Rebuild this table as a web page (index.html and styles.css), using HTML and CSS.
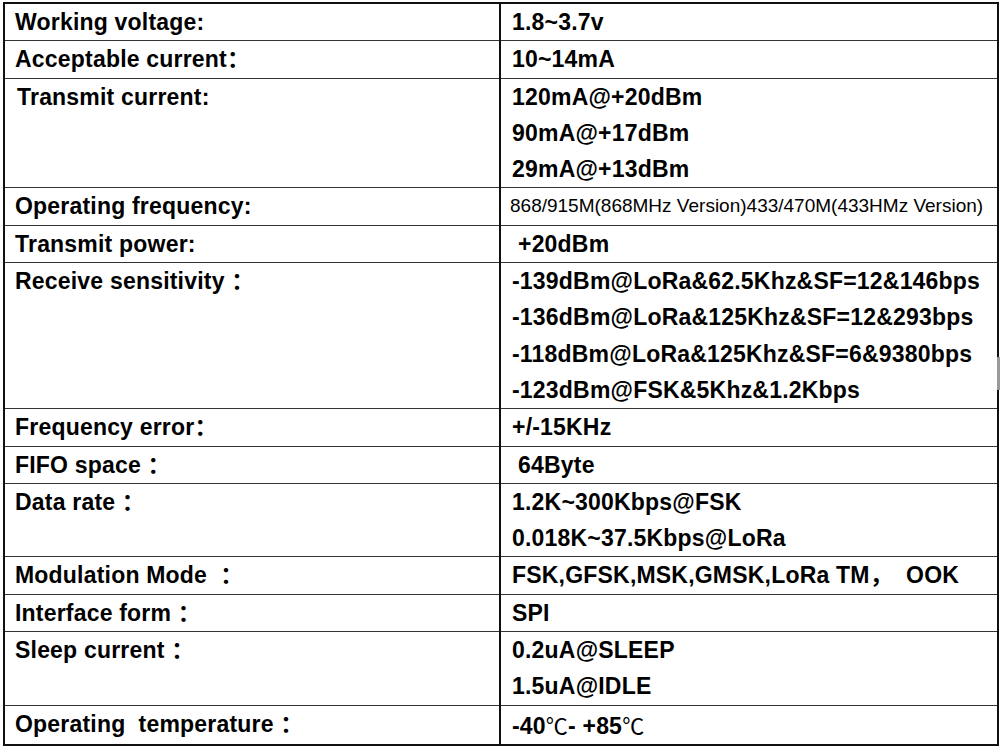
FILE: index.html
```html
<!DOCTYPE html>
<html>
<head>
<meta charset="utf-8">
<title>Specifications</title>
<link rel="stylesheet" href="styles.css">
</head>
<body>
<div class="page">
  <table class="spec">
    <colgroup><col class="c-label"><col class="c-value"></colgroup>
    <tbody>
      <tr><td>Working voltage:</td><td>1.8~3.7v</td></tr>
      <tr><td>Acceptable current：</td><td>10~14mA</td></tr>
      <tr><td class="ind">Transmit current:</td><td><div>120mA@+20dBm</div><div>90mA@+17dBm</div><div>29mA@+13dBm</div></td></tr>
      <tr><td>Operating frequency:</td><td class="small">868/915M(868MHz Version)433/470M(433HMz Version)</td></tr>
      <tr><td>Transmit power:</td><td><span class="lead">+20dBm</span></td></tr>
      <tr><td>Receive sensitivity ：</td><td><div>-139dBm@LoRa&amp;62.5Khz&amp;SF=12&amp;146bps</div><div>-136dBm@LoRa&amp;125Khz&amp;SF=12&amp;293bps</div><div>-118dBm@LoRa&amp;125Khz&amp;SF=6&amp;9380bps</div><div>-123dBm@FSK&amp;5Khz&amp;1.2Kbps</div></td></tr>
      <tr><td>Frequency error：</td><td>+/-15KHz</td></tr>
      <tr><td>FIFO space ：</td><td><span class="lead">64Byte</span></td></tr>
      <tr><td>Data rate ：</td><td><div>1.2K~300Kbps@FSK</div><div>0.018K~37.5Kbps@LoRa</div></td></tr>
      <tr><td>Modulation Mode&nbsp; ：</td><td>FSK,GFSK,MSK,GMSK,LoRa TM，&nbsp;&nbsp;OOK</td></tr>
      <tr><td>Interface form ：</td><td>SPI</td></tr>
      <tr><td>Sleep current ：</td><td><div>0.2uA@SLEEP</div><div>1.5uA@IDLE</div></td></tr>
      <tr><td>Operating&nbsp; temperature ：</td><td>-40<span class="deg">℃</span>- +85<span class="deg">℃</span></td></tr>
    </tbody>
  </table>
  <span class="edge-mark"></span>
</div>
</body>
</html>
```

FILE: styles.css
```css
html, body {
  margin: 0;
  padding: 0;
  background: #ffffff;
}

.page {
  position: relative;
  width: 1000px;
  height: 747px;
  padding: 2px 0 0 3px;
  box-sizing: border-box;
}

.spec {
  border-collapse: collapse;
  table-layout: fixed;
  width: 994px;
  font-family: "Liberation Sans", Arial, "Noto Sans CJK SC", sans-serif;
  font-weight: bold;
  font-size: 23px;
  letter-spacing: 0.2px;
  color: #000;
  border: 2px solid #111;
}

.c-label { width: 496px; }
.c-value { width: 498px; }

.spec td {
  vertical-align: top;
  padding: 0 0 0 10px;
  line-height: 36.3px;
  border-top: 1px solid #333;
  border-bottom: 1px solid #333;
  border-left: 2px solid #111;
  border-right: 2px solid #111;
  white-space: nowrap;
  overflow: hidden;
}

.spec td.ind { padding-left: 12px; }

.spec td + td { padding-left: 11px; }

.spec td.small {
  font-weight: normal;
  font-size: 19px;
  letter-spacing: 0;
  padding-left: 9px;
}

.lead { padding-left: 6px; }

.deg {
  font-family: "Noto Sans CJK SC", sans-serif;
  font-weight: normal;
  font-size: 22px;
}

.edge-mark {
  position: absolute;
  right: 0;
  top: 357px;
  width: 3px;
  height: 33px;
  background: #9a9a9a;
}
```
